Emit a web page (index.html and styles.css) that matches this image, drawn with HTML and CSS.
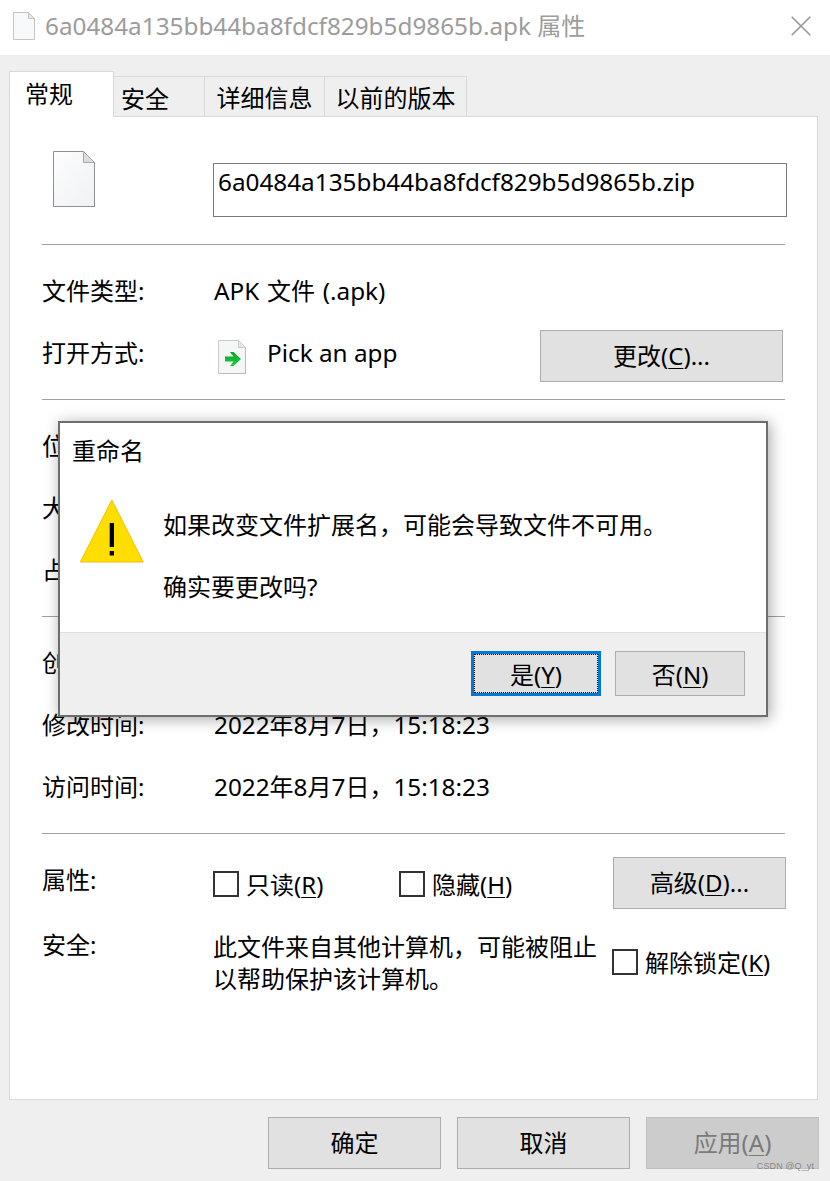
FILE: index.html
```html
<!DOCTYPE html>
<html lang="zh-CN">
<head>
<meta charset="utf-8">
<title>属性</title>
<link rel="stylesheet" href="styles.css">
</head>
<body>
<div class="window">
  <header class="titlebar">
    <svg class="title-icon" viewBox="0 0 22 28"><path d="M.5.5H15.5L21.5 6.5V27.5H.5Z" fill="#f8f9fa" stroke="#c4c4c4"/><path d="M15.5.5V6.5H21.5Z" fill="#e4e4e4" stroke="#c4c4c4"/></svg>
    <span class="title-text"><span class="lat">6a0484a135bb44ba8fdcf829b5d9865b.apk</span> 属性</span>
    <svg class="close" viewBox="0 0 20 20"><path d="M.7.7 19.3 19.3M19.3.7.7 19.3" stroke="#979797" stroke-width="1.6" fill="none"/></svg>
  </header>

  <main class="body">
    <nav class="tabs">
      <div class="tab tab-active">常规</div>
      <div class="tab tab-security">安全</div>
      <div class="tab tab-details">详细信息</div>
      <div class="tab tab-versions">以前的版本</div>
    </nav>
    <div class="panel">
      <section class="name-section">
        <svg class="file-icon" viewBox="0 0 42 56"><defs><linearGradient id="pg" x1="0" y1="0" x2="1" y2="1"><stop offset="0" stop-color="#fdfdfe"/><stop offset="1" stop-color="#eff1f3"/></linearGradient></defs><path d="M.5.5H30.5L41.5 11.5V55.5H.5Z" fill="url(#pg)" stroke="#8f8f8f"/><path d="M30.5.5V11.5H41.5Z" fill="#dcdcdc" stroke="#a8a8a8"/></svg>
        <div class="name-input"><span class="lat">6a0484a135bb44ba8fdcf829b5d9865b.zip</span></div>
      </section>

      <section class="group">
        <div class="row"><span class="label">文件类型:</span><span class="value"><span class="lat">APK</span> 文件 <span class="lat">(.apk)</span></span></div>
        <div class="row">
          <span class="label">打开方式:</span>
          <svg class="app-icon" viewBox="0 0 28 34"><defs><linearGradient id="ag" x1="0" y1="0" x2="0" y2="1"><stop offset="0" stop-color="#08a025"/><stop offset="1" stop-color="#22cf42"/></linearGradient></defs><path d="M.5.5H20.5L27.5 7.5V33.5H.5Z" fill="#f5f6f6" stroke="#cacaca"/><path d="M1 33.5H27.5V8" fill="none" stroke="#b9b9b9"/><path d="M20.5.5V7.5H27.5Z" fill="#e8e8e8" stroke="#cacaca"/><path d="M7 16.5H15.5L12 12H15.5L23 19 15.5 26H12L15.5 21.5H7Z" fill="url(#ag)"/></svg>
          <span class="app-name lat">Pick an app</span>
          <button class="btn btn-change"><span class="btn-label">更改(<u>C</u>)...</span></button>
        </div>
      </section>

      <section class="group">
        <div class="row"><span class="label">位</span></div>
        <div class="row"><span class="label">大</span></div>
        <div class="row"><span class="label">占</span></div>
      </section>

      <section class="group">
        <div class="row"><span class="label">创</span></div>
        <div class="row"><span class="label">修改时间:</span><span class="value"><span class="lat">2022</span>年<span class="lat">8</span>月<span class="lat">7</span>日，<span class="lat">15:18:23</span></span></div>
        <div class="row"><span class="label">访问时间:</span><span class="value"><span class="lat">2022</span>年<span class="lat">8</span>月<span class="lat">7</span>日，<span class="lat">15:18:23</span></span></div>
      </section>

      <section class="group group-last">
        <div class="row row-attrs">
          <span class="label">属性:</span>
          <label class="check check-readonly"><i class="box"></i><span class="check-text">只读(<u>R</u>)</span></label>
          <label class="check check-hidden"><i class="box"></i><span class="check-text">隐藏(<u>H</u>)</span></label>
          <button class="btn btn-advanced"><span class="btn-label">高级(<u>D</u>)...</span></button>
        </div>
        <div class="row row-security">
          <span class="label">安全:</span>
          <p class="sec-text">此文件来自其他计算机，可能被阻止<br>以帮助保护该计算机。</p>
          <label class="check check-unblock"><i class="box"></i><span class="check-text">解除锁定(<u>K</u>)</span></label>
        </div>
      </section>
    </div>
    <footer class="actions">
      <button class="btn btn-action"><span class="btn-label">确定</span></button>
      <button class="btn btn-action"><span class="btn-label">取消</span></button>
      <button class="btn btn-action btn-disabled"><span class="btn-label">应用(<u>A</u>)</span></button>
    </footer>
  </main>

  <div class="dialog">
    <div class="dialog-title">重命名</div>
    <div class="dialog-content">
      <svg class="warn" viewBox="0 0 64 64"><path d="M31.8 1 63.2 63H.4Z" fill="#ffde00" stroke="#f6bc00" stroke-width="1"/><rect x="29.7" y="24" width="4.3" height="24" fill="#000"/><rect x="29.7" y="52" width="4.3" height="4.5" fill="#000"/></svg>
      <div class="dialog-msg">
        <p>如果改变文件扩展名，可能会导致文件不可用。</p>
        <p>确实要更改吗?</p>
      </div>
    </div>
    <div class="dialog-foot">
      <button class="btn btn-dialog btn-focus">是(<u>Y</u>)</button>
      <button class="btn btn-dialog">否(<u>N</u>)</button>
    </div>
  </div>

  <span class="watermark">CSDN @Q_yt</span>
</div>
</body>
</html>
```
FILE: styles.css
```css
* { box-sizing: border-box; }
html, body { margin: 0; height: 100%; overflow: hidden; }
body {
  font-family: "Noto Sans", "Noto Sans CJK SC", sans-serif;
  font-size: 24px;
  color: #000;
  background: #fff;
}
p { margin: 0; }
u { text-underline-offset: 3px; text-decoration-thickness: 1px; }
.lat { font-size: 24.3px; }

.window { position: relative; width: 830px; height: 1181px; }

.titlebar { height: 55px; background: #fff; display: flex; align-items: center; padding: 0 19px 3px 13px; }
.title-icon { width: 22px; height: 28px; flex: none; }
.title-text { margin-left: 10px; color: #9c9c9c; line-height: 30px; flex: 1; white-space: nowrap; }
.close { width: 20px; height: 20px; flex: none; }

.body { height: 1126px; background: #efefef; padding: 16px 12px 0 9px; }

.tabs { display: flex; height: 46px; align-items: flex-end; position: relative; z-index: 1; }
.tab {
  height: 41px;
  border: 1px solid #d9d9d9;
  border-left: 0;
  border-bottom: 0;
  line-height: 41px;
  text-align: center;
  white-space: nowrap;
}
.tab-active { width: 105px; height: 46px; background: #fff; border-left: 1px solid #d9d9d9; line-height: 44px; padding-right: 25px; }
.tab-security { width: 91px; padding-right: 28px; line-height: 44px; }
.tab-details { width: 120px; }
.tab-versions { width: 142px; }

.panel {
  height: 984px;
  margin-top: -1px;
  background: #fff;
  border: 1px solid #d9d9d9;
  padding: 0 32px;
}

.name-section { height: 128px; border-bottom: 1px solid #a0a0a0; display: flex; padding: 34px 0 0 11px; }
.file-icon { width: 42px; height: 56px; flex: none; }
.name-input {
  width: 574px;
  height: 54px;
  flex: none;
  margin: 12px 0 0 118px;
  border: 1px solid #7a7a7a;
  padding: 0 4px;
  line-height: 36px;
  white-space: nowrap;
}

.group { height: 155px; padding-top: 16px; border-bottom: 1px solid #a0a0a0; }
.group + .group { height: 217px; }
.group-last { border-bottom: 0; }

.row { height: 62px; display: flex; align-items: center; position: relative; }
.label { width: 172px; flex: none; white-space: nowrap; line-height: 32px; margin-top: -2px; }
.value { white-space: nowrap; line-height: 32px; margin-top: -2px; word-spacing: 1.5px; }

.app-icon { width: 28px; height: 34px; margin: 6px 0 0 4px; flex: none; }
.app-name { margin: -4px 0 0 21px; flex: 1; }

.btn {
  font: inherit;
  color: #000;
  background: #e1e1e1;
  border: 1px solid #adadad;
  padding: 0;
  white-space: nowrap;
}
.btn-label { display: block; margin-top: -3px; }
.btn-change { width: 243px; height: 52px; margin: 4px 2px 0 0; }
.btn-advanced { width: 173px; height: 52px; margin-left: auto; margin-right: -1px; margin-top: 4px; }

.check { display: flex; align-items: center; gap: 7px; white-space: nowrap; line-height: 32px; }
.check-text { margin-top: 2px; }
.box { width: 26px; height: 26px; border: 2.5px solid #333; flex: none; }
.check-readonly { width: 186px; margin: 6px 0 0 -1px; }
.check-hidden { margin-top: 6px; }

.row-security { align-items: flex-start; padding-top: 19px; }
.sec-text { width: 399px; flex: none; margin-left: -1px; line-height: 32px; white-space: nowrap; }
.check-unblock { margin-top: 14px; }

.actions { display: flex; justify-content: flex-end; gap: 16px; padding-top: 17px; margin-right: -1px; }
.btn-action { width: 173px; height: 52px; }
.btn-disabled { background: #ccc; border-color: #bfbfbf; color: #7a7a7a; }

.dialog {
  position: absolute;
  left: 58px;
  top: 421px;
  width: 710px;
  height: 296px;
  background: #fff;
  border: 2px solid #6d6d6d;
  box-shadow: 2px 2px 14px rgba(0, 0, 0, .35);
  display: flex;
  flex-direction: column;
}
.dialog-title { padding: 12px 0 0 12px; line-height: 32px; height: 49px; }
.dialog-content { flex: 1; display: flex; padding: 27px 0 0 20px; }
.warn { width: 64px; height: 64px; flex: none; }
.dialog-msg { margin-left: 19px; display: flex; flex-direction: column; gap: 30px; line-height: 32px; margin-top: 10px; white-space: nowrap; }
.dialog-foot {
  height: 83px;
  background: #efefef;
  border-top: 1px solid #dfdfdf;
  display: flex;
  justify-content: flex-end;
  gap: 14px;
  padding: 18px 21px 0 0;
}
.btn-dialog { width: 130px; height: 45px; }
.btn-focus { border: 3px solid #0078d7; outline: 1px dotted #000; outline-offset: -4px; }

.watermark {
  position: absolute;
  right: 16px;
  top: 1160px;
  font: 9px/12px "Liberation Sans", sans-serif;
  letter-spacing: .1px;
  color: rgba(100, 100, 100, .7);
  white-space: nowrap;
}
```
